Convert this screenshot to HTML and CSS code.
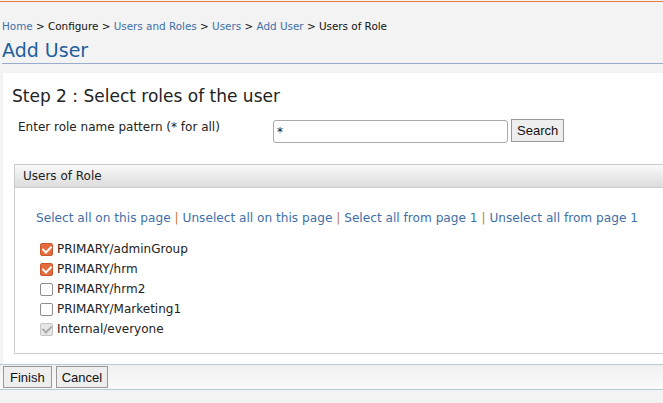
FILE: index.html
```html
<!DOCTYPE html>
<html>
<head>
<meta charset="utf-8">
<link rel="stylesheet" href="styles.css">
</head>
<body>
<div class="topline"></div>
<div class="breadcrumb">
  <a href="#">Home</a> &gt; <span class="cur">Configure</span> &gt; <a href="#">Users and Roles</a> &gt; <a href="#">Users</a> &gt; <a href="#">Add User</a> &gt; <span class="cur">Users of Role</span>
</div>
<h1 class="title">Add User</h1>
<div class="content">
  <h2 class="step">Step 2 : Select roles of the user</h2>
  <div class="search-row">
    <label class="search-label">Enter role name pattern (* for all)</label>
    <input class="search-input" type="text" value="*">
    <button class="btn search-btn">Search</button>
  </div>
  <div class="panel">
    <div class="panel-head">Users of Role</div>
    <div class="panel-body">
      <div class="select-links">
        <a href="#">Select all on this page</a> <span class="sep">|</span> <a href="#">Unselect all on this page</a> <span class="sep">|</span> <a href="#">Select all from page 1</a> <span class="sep">|</span> <a href="#">Unselect all from page 1</a>
      </div>
      <ul class="roles">
        <li><span class="cb checked"></span>PRIMARY/adminGroup</li>
        <li><span class="cb checked"></span>PRIMARY/hrm</li>
        <li><span class="cb"></span>PRIMARY/hrm2</li>
        <li><span class="cb"></span>PRIMARY/Marketing1</li>
        <li><span class="cb disabled"></span>Internal/everyone</li>
      </ul>
    </div>
  </div>
</div>
<div class="buttonbar">
  <button class="btn">Finish</button>
  <button class="btn">Cancel</button>
</div>
</body>
</html>
```

FILE: styles.css
```css
html, body {
  margin: 0;
  padding: 0;
}
body {
  background: #f3f3f3;
  font-family: "DejaVu Sans", sans-serif;
  color: #111;
  overflow: hidden;
}
a {
  color: #3f6fa8;
  text-decoration: none;
}
.topline {
  margin-top: 1px;
  height: 1px;
  background: #e2793f;
}
.breadcrumb {
  font-size: 10.4px;
  line-height: 14px;
  padding: 17px 0 0 2px;
  color: #111;
}
.title {
  margin: 5px 0 0 2px;
  font-size: 19px;
  font-weight: normal;
  color: #1f5f9e;
  line-height: 24px;
  padding-bottom: 1px;
  border-bottom: 1px solid #9aaccb;
}
.content {
  margin: 9px 0 0 3px;
  background: #fff;
  padding: 11px 0 10px 0;
}
.step {
  margin: 0 0 0 9px;
  font-size: 17px;
  font-weight: normal;
  color: #222;
  line-height: 24px;
}
.search-row {
  display: flex;
  align-items: flex-start;
  margin-top: 11px;
  padding-left: 15px;
}
.search-label {
  width: 255px;
  font-size: 12px;
  line-height: 16px;
  padding-top: 0;
  color: #222;
}
.search-input {
  box-sizing: border-box;
  width: 235px;
  height: 23px;
  margin: 1px 0 0 0;
  border: 1px solid #aaa;
  border-radius: 3px;
  padding: 2px 3px;
  font-family: "DejaVu Sans", sans-serif;
  font-size: 12px;
  color: #111;
}
.btn {
  font-family: "Liberation Sans", Arial, sans-serif;
  font-size: 13px;
  background: #eee;
  border: 1px solid #999;
  color: #111;
  padding: 2px 5px;
  height: 23px;
  border-radius: 0;
}
.search-btn {
  margin: 0 0 0 3px;
}
.panel {
  margin: 21px 0 0 11px;
  border: 1px solid #ccc;
  border-right: none;
}
.panel-head {
  height: 22px;
  line-height: 22px;
  padding-left: 8px;
  font-size: 12px;
  color: #222;
  background: linear-gradient(#f9f9f9, #dcdcdc);
  border-bottom: 1px solid #ccc;
}
.panel-body {
  padding: 22px 0 14px 21px;
}
.select-links {
  font-size: 12.15px;
  line-height: 16px;
}
.sep {
  color: #c7782e;
}
.roles {
  list-style: none;
  margin: 13px 0 0 4px;
  padding: 0;
}
.roles li {
  display: flex;
  align-items: center;
  height: 20px;
  font-size: 12px;
  color: #222;
}
.cb {
  box-sizing: border-box;
  width: 13px;
  height: 13px;
  border: 1px solid #8f8f8f;
  border-radius: 2px;
  background: #fff;
  margin-right: 4px;
  position: relative;
}
.cb.checked {
  background: #e36b3e;
  border-color: #c9582f;
}
.cb.checked::after, .cb.disabled::after {
  content: "";
  position: absolute;
  left: 3px;
  top: 0px;
  width: 4px;
  height: 7px;
  border: solid #fff;
  border-width: 0 2px 2px 0;
  transform: rotate(45deg);
}
.cb.disabled {
  background: #e6e6e6;
  border-color: #c4c4c4;
}
.cb.disabled::after {
  border-color: #aaa;
}
.buttonbar {
  margin-top: 0;
  border-top: 1px solid #b7cad6;
  border-bottom: 1px solid #b7cad6;
  background: linear-gradient(#f0f0f0, #fbfbfb);
  padding: 1px 0 1px 3px;
  display: flex;
  gap: 4px;
}
.buttonbar .btn {
  height: 22px;
  padding: 1px 6px;
}
.buttonbar .btn + .btn {
  padding: 1px 5px;
}
```
